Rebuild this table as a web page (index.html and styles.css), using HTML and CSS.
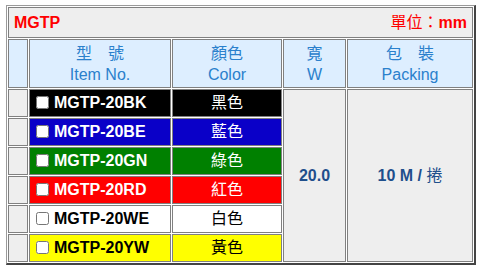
FILE: index.html
```html
<!DOCTYPE html>
<html lang="zh-Hant">
<head>
<meta charset="utf-8">
<title>MGTP</title>
<link rel="stylesheet" href="styles.css">
</head>
<body>
<table class="spec">
  <colgroup>
    <col class="c-idx">
    <col class="c-item">
    <col class="c-color">
    <col class="c-w">
    <col class="c-pack">
  </colgroup>
  <tr>
    <td class="title" colspan="5">
      <div class="title-bar"><span>MGTP</span><span><span class="cjk">單位：</span>mm</span></div>
    </td>
  </tr>
  <tr class="head">
    <th></th>
    <th>型　號<br>Item No.</th>
    <th>顏色<br>Color</th>
    <th>寬<br>W</th>
    <th>包　裝<br>Packing</th>
  </tr>
  <tr>
    <td class="idx"></td>
    <td class="item bk"><input type="checkbox">MGTP-20BK</td>
    <td class="color bk">黑色</td>
    <td class="val" rowspan="6">20.0</td>
    <td class="val" rowspan="6">10 M / <span class="cjk">捲</span></td>
  </tr>
  <tr>
    <td class="idx"></td>
    <td class="item be"><input type="checkbox">MGTP-20BE</td>
    <td class="color be">藍色</td>
  </tr>
  <tr>
    <td class="idx"></td>
    <td class="item gn"><input type="checkbox">MGTP-20GN</td>
    <td class="color gn">綠色</td>
  </tr>
  <tr>
    <td class="idx"></td>
    <td class="item rd"><input type="checkbox">MGTP-20RD</td>
    <td class="color rd">紅色</td>
  </tr>
  <tr>
    <td class="idx"></td>
    <td class="item we"><input type="checkbox">MGTP-20WE</td>
    <td class="color we">白色</td>
  </tr>
  <tr>
    <td class="idx"></td>
    <td class="item yw"><input type="checkbox">MGTP-20YW</td>
    <td class="color yw">黃色</td>
  </tr>
</table>
</body>
</html>
```
FILE: styles.css
```css
html, body {
  margin: 0;
  padding: 0;
  background: #fff;
}
body {
  font-family: "Liberation Sans", Arial, "Noto Sans CJK TC", sans-serif;
  font-size: 16px;
  line-height: 18px;
}
.spec {
  margin: 5px 0 0 6px;
  width: 470px;
  table-layout: fixed;
  border-collapse: separate;
  border-spacing: 1px;
  border-style: solid;
  border-width: 1px 2px 2px 1px;
  border-color: #9a9a9a #444 #444 #9a9a9a;
  background: #fff;
}
.c-idx { width: 20px; }
.c-item { width: 142px; }
.c-color { width: 110px; }
.c-w { width: 63px; }
.c-pack { width: 126px; }
.spec td, .spec th {
  border: 1px solid #808080;
  box-sizing: border-box;
  padding: 0 2px;
}
.title {
  height: 31px;
  background: #eeeeee;
  color: #ff0000;
  font-weight: bold;
}
.title-bar {
  display: flex;
  justify-content: space-between;
  align-items: baseline;
  padding: 0 3px 0 3px;
}
.cjk {
  font-weight: normal;
}
.head th {
  height: 49px;
  background: #ddeeff;
  color: #2a80cc;
  font-weight: normal;
  line-height: 21px;
  text-align: center;
}
.spec .idx {
  height: 28px;
  background: #eeeeee;
}
.item {
  font-weight: bold;
  white-space: nowrap;
}
.item input {
  width: 13px;
  height: 13px;
  margin: 0 5px 0 4px;
  vertical-align: -1px;
}
.color {
  text-align: center;
}
.val {
  background: #eeeeee;
  color: #1f4f8c;
  font-weight: bold;
  text-align: center;
}
.bk { background: #000000; color: #fff; }
.be { background: #0a00c8; color: #fff; }
.gn { background: #008000; color: #fff; }
.rd { background: #ff0000; color: #fff; }
.we { background: #ffffff; color: #000; }
.yw { background: #ffff00; color: #000; }
```
